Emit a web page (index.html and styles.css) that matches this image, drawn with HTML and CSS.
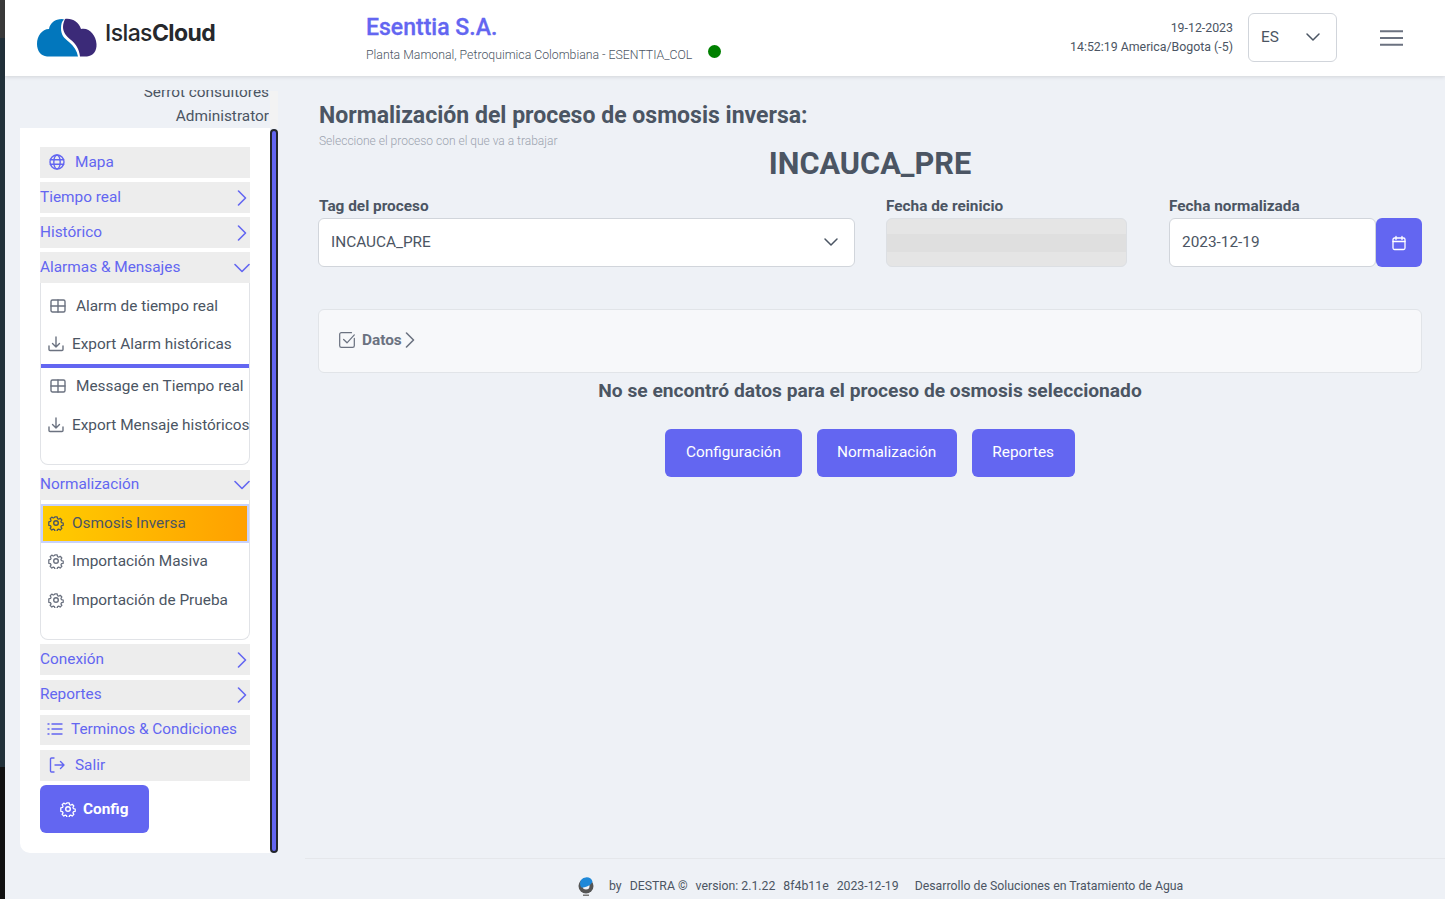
FILE: index.html
```html
<!DOCTYPE html>
<html lang="es">
<head>
    <meta charset="UTF-8">
    <meta name="viewport" content="width=device-width, initial-scale=1.0">
    <title>Normalización - IslasCloud</title>
    <link rel="stylesheet" href="styles.css">
</head>
<body>
    <!-- Desktop peeking out at the left of the window -->
    <div class="desk-strip"></div>

    <div class="app">
        <header class="topbar">
            <div class="brand">
                <svg class="brand-logo" viewBox="0 0 62 39">
                    <path fill="#0277bd" d="M26 1C19 1 14 5 13 11C6 11 1 18 1 26C1 33 5 38 11 38.500H42C41 33 38 28 33 24C28 20 25 17 25 10C25 6 26 3 28 1.500Z"/>
                    <path fill="#3b2a78" d="M29 1C36 0 43 4 45 11C53 9 60 17 60.500 26C61 33 57 38 51 38.500H44C43 31 40 26 35 22C30 18 27 14 27 9C27 6 28 3 29 1Z"/>
                </svg>
                <span class="brand-name">Islas<b>Cloud</b></span>
            </div>
            <div class="client">
                <div class="client-name">Esenttia S.A.</div>
                <div class="client-plant">Planta Mamonal, Petroquimica Colombiana - ESENTTIA_COL <span class="status-dot"></span></div>
            </div>
            <div class="clock">
                <div>19-12-2023</div>
                <div>14:52:19 America/Bogota (-5)</div>
            </div>
            <div class="lang">
                <span>ES</span>
                <svg class="lang-caret" viewBox="0 0 16 16"><path d="M2 5l6 6 6-6"/></svg>
            </div>
            <svg class="burger" viewBox="0 0 24 18"><path d="M0 2h24M0 9h24M0 16h24"/></svg>
        </header>

        <div class="layout">
            <aside class="sidebar">
                <div class="user-box">
                    <div class="user-clip">
                        <div class="user-line">Serrot consultores</div>
                        <div class="user-line">Administrator</div>
                    </div>
                </div>
                <div class="panel-wrap">
                    <nav class="panel">
                        <a class="menu-item menu-icon mapa">
                            <svg class="ico" viewBox="0 0 16 16"><circle cx="8" cy="8" r="7"/><ellipse cx="8" cy="8" rx="3.200" ry="7"/><path d="M1.300 5.700h13.400M1.300 10.300h13.400"/></svg>
                            <span>Mapa</span>
                        </a>
                        <a class="menu-item">Tiempo real
                            <svg class="caret" viewBox="0 0 16 16"><path d="M4.500 1l7 7-7 7"/></svg>
                        </a>
                        <a class="menu-item">Histórico
                            <svg class="caret" viewBox="0 0 16 16"><path d="M4.500 1l7 7-7 7"/></svg>
                        </a>
                        <a class="menu-item">Alarmas &amp; Mensajes
                            <svg class="caret" viewBox="0 0 16 16"><path d="M1 4.500l7 7 7-7"/></svg>
                        </a>
                        <div class="submenu sub-alarms">
                            <a class="sub-item first">
                                <svg class="ico-grid" viewBox="0 0 16 16"><rect x="1" y="2" width="14" height="12" rx="1.500"/><path d="M1 8h14M8 2v12"/></svg>
                                <span>Alarm de tiempo real</span>
                            </a>
                            <a class="sub-item tight">
                                <svg class="ico-sub" viewBox="0 0 16 16"><path d="M1 10v3.500a1 1 0 0 0 1 1h12a1 1 0 0 0 1-1V10M8 1v10M4.500 7.500L8 11l3.500-3.500"/></svg>
                                <span>Export Alarm históricas</span>
                            </a>
                            <div class="sub-divider"></div>
                            <a class="sub-item after-divider">
                                <svg class="ico-grid" viewBox="0 0 16 16"><rect x="1" y="2" width="14" height="12" rx="1.500"/><path d="M1 8h14M8 2v12"/></svg>
                                <span>Message en Tiempo real</span>
                            </a>
                            <a class="sub-item tall">
                                <svg class="ico-sub" viewBox="0 0 16 16"><path d="M1 10v3.500a1 1 0 0 0 1 1h12a1 1 0 0 0 1-1V10M8 1v10M4.500 7.500L8 11l3.500-3.500"/></svg>
                                <span>Export Mensaje históricos</span>
                            </a>
                        </div>
                        <a class="menu-item norm">Normalización
                            <svg class="caret" viewBox="0 0 16 16"><path d="M1 4.500l7 7 7-7"/></svg>
                        </a>
                        <div class="submenu sub-norm">
                            <a class="sub-item active">
                                <svg class="ico-sub" viewBox="0 0 16 16"><use href="#gear"/></svg>
                                <span>Osmosis Inversa</span>
                            </a>
                            <a class="sub-item">
                                <svg class="ico-sub" viewBox="0 0 16 16"><use href="#gear"/></svg>
                                <span>Importación Masiva</span>
                            </a>
                            <a class="sub-item">
                                <svg class="ico-sub" viewBox="0 0 16 16"><use href="#gear"/></svg>
                                <span>Importación de Prueba</span>
                            </a>
                        </div>
                        <a class="menu-item conn">Conexión
                            <svg class="caret" viewBox="0 0 16 16"><path d="M4.500 1l7 7-7 7"/></svg>
                        </a>
                        <a class="menu-item short">Reportes
                            <svg class="caret" viewBox="0 0 16 16"><path d="M4.500 1l7 7-7 7"/></svg>
                        </a>
                        <a class="menu-item short menu-icon terms">
                            <svg class="ico" viewBox="0 0 16 16"><path d="M5 3h10M5 8h10M5 13h10M1 3h1M1 8h1M1 13h1"/></svg>
                            <span>Terminos &amp; Condiciones</span>
                        </a>
                        <a class="menu-item menu-icon mapa">
                            <svg class="ico" viewBox="0 0 16 16"><path d="M5 1H2.500a1 1 0 0 0-1 1v12a1 1 0 0 0 1 1H5M6 8h9M11.500 4.500L15 8l-3.500 3.500"/></svg>
                            <span>Salir</span>
                        </a>
                        <button class="btn btn-config">
                            <svg class="ico-btn" viewBox="0 0 16 16"><use href="#gear"/></svg>
                            Config
                        </button>
                    </nav>
                    <div class="scroll-thumb"></div>
                </div>
            </aside>

            <main class="content">
                <h1 class="page-title">Normalización del proceso de osmosis inversa:</h1>
                <p class="page-hint">Seleccione el proceso con el que va a trabajar</p>
                <h2 class="process-name">INCAUCA_PRE</h2>

                <div class="form-row">
                    <div class="field field-tag">
                        <label>Tag del proceso</label>
                        <div class="input">
                            <span>INCAUCA_PRE</span>
                            <svg class="lang-caret" viewBox="0 0 16 16"><path d="M2 5l6 6 6-6"/></svg>
                        </div>
                    </div>
                    <div class="field field-reset">
                        <label>Fecha de reinicio</label>
                        <div class="input input-disabled"><div class="disabled-band"></div></div>
                    </div>
                    <div class="field field-date">
                        <label>Fecha normalizada</label>
                        <div class="date-group">
                            <div class="input"><span>2023-12-19</span></div>
                            <button class="btn-cal">
                                <svg viewBox="0 0 16 16"><rect x="2" y="3" width="12" height="11.500" rx="1.500"/><path d="M2 6.500h12M5 1.500v3M11 1.500v3"/></svg>
                            </button>
                        </div>
                    </div>
                </div>

                <div class="datos-card">
                    <svg class="datos-check" viewBox="0 0 16 16"><path d="M14.500 6.500V13a1.500 1.500 0 0 1-1.500 1.500H3A1.500 1.500 0 0 1 1.500 13V3A1.500 1.500 0 0 1 3 1.500h9M5 7.500l3 3 6.500-7"/></svg>
                    <span class="datos-label">Datos</span>
                    <svg class="datos-caret" viewBox="0 0 16 16"><path d="M4.500 1l7 7-7 7"/></svg>
                </div>

                <p class="no-data">No se encontró datos para el proceso de osmosis seleccionado</p>

                <div class="actions">
                    <button class="btn">Configuración</button>
                    <button class="btn">Normalización</button>
                    <button class="btn">Reportes</button>
                </div>
            </main>
        </div>

        <footer class="footer">
            <svg class="footer-logo" viewBox="0 0 18 20">
                <circle cx="9" cy="10" r="7.500" fill="#555"/>
                <circle cx="9" cy="10" r="3.500" fill="#eef1f6"/>
                <path fill="#1e88d8" d="M3 7a6.500 6.500 0 0 1 12.500-1.500C14 9 10 11.500 4.500 11.500 3.500 10.500 3 9 3 7z"/>
                <path fill="#777" d="M6 18.500h6V20H6z"/>
            </svg>
            <span class="footer-by">by</span>
            <span class="footer-text">DESTRA ©</span>
            <span class="footer-text">version: 2.1.22</span>
            <span class="footer-text">8f4b11e</span>
            <span class="footer-text">2023-12-19</span>
            <span class="footer-text footer-tag">Desarrollo de Soluciones en Tratamiento de Agua</span>
        </footer>
    </div>

    <svg class="defs" width="0" height="0">
        <symbol id="gear" viewBox="0 0 16 16">
            <path d="M6.700 1.300h2.600l.4 1.900 1.300.6 1.700-1 1.800 1.800-1 1.700.6 1.300 1.900.4v2.600l-1.900.4-.6 1.300 1 1.700-1.800 1.800-1.700-1-1.300.6-.4 1.900H6.700l-.4-1.900-1.300-.6-1.700 1-1.800-1.800 1-1.700-.6-1.300-1.900-.4V6.700l1.900-.4.600-1.300-1-1.700 1.800-1.800 1.700 1 1.300-.6z" transform="translate(.8 .8) scale(.9)"/>
            <circle cx="8" cy="8" r="2.300"/>
        </symbol>
    </svg>
</body>
</html>
```

FILE: styles.css
```css
/* General */
* {
    box-sizing: border-box;
}

html {
    font-size: 15.36px;
    height: 100%;
}

body {
    margin: 0;
    height: 100%;
    font-family: Roboto, "Liberation Sans", sans-serif;
    font-size: 1rem;
    background: #eef1f6;
    color: #4b5563;
    overflow: hidden;
}

svg {
    fill: none;
    stroke: currentColor;
    stroke-linecap: round;
    stroke-linejoin: round;
    flex-shrink: 0;
}

.defs {
    position: absolute;
}

.desk-strip {
    position: absolute;
    left: 0;
    top: 0;
    bottom: 0;
    width: 5px;
    background: linear-gradient(#3a3a3a 0, #3a3a3a 38px, #22313a 38px, #22313a 767px, #111 767px);
}

.app {
    margin-left: 5px;
    height: 899px;
    display: flex;
    flex-direction: column;
}

/* Top bar */
.topbar {
    height: 76px;
    flex-shrink: 0;
    background: #fff;
    box-shadow: 0 1px 4px rgba(0, 0, 0, 0.12);
    display: flex;
    align-items: center;
    position: relative;
    z-index: 2;
}

.brand {
    width: 361px;
    padding-left: 31px;
    display: flex;
    align-items: center;
    gap: 8px;
}

.brand-logo {
    width: 62px;
    height: 39px;
    stroke: none;
    margin-top: -1px;
}

.brand-name {
    font-family: Inter, sans-serif;
    font-weight: 500;
    font-size: 23px;
    letter-spacing: -0.6px;
    color: #26282c;
    margin-top: -10px;
    margin-left: -1px;
}

.brand-name b {
    font-weight: 700;
}

.client {
    flex: 1;
}

.client-name {
    font-size: 23.04px;
    font-weight: 500;
    line-height: 28px;
    color: #6366f1;
    margin-bottom: 4px;
    -webkit-text-stroke: 0.3px #6366f1;
}

.client-plant {
    font-size: 12.29px;
    font-weight: 300;
    color: #4b5563;
    line-height: 14px;
}

.status-dot {
    display: inline-block;
    width: 13px;
    height: 13px;
    background: #008000;
    border-radius: 50%;
    margin-left: 13px;
    position: relative;
    top: -1px;
}

.clock {
    font-size: 12.35px;
    text-align: right;
    line-height: 19px;
    margin-right: 15px;
    margin-top: -1px;
}

.lang {
    width: 89px;
    height: 49px;
    border: 1px solid #d1d5db;
    border-radius: 6px;
    display: flex;
    align-items: center;
    justify-content: space-between;
    padding: 0 15px 2px 12px;
    margin-right: 43px;
    margin-top: -1px;
}

.lang-caret {
    width: 16px;
    height: 16px;
    stroke-width: 1.500;
}

.burger {
    width: 23px;
    height: 18px;
    stroke: #6b7280;
    stroke-width: 2;
    margin-right: 42px;
    stroke-linecap: butt;
}

/* Sidebar */
.layout {
    flex: 1;
    display: flex;
    min-height: 0;
}

.sidebar {
    width: 300px;
    padding-left: 15px;
    flex-shrink: 0;
}

.user-box {
    width: 258px;
    height: 52px;
    padding: 14px 9px 0 0;
    position: relative;
    text-align: right;
    color: #4b5563;
    line-height: 24px;
}

.user-box::after {
    content: "";
    position: absolute;
    right: 0;
    top: 15px;
    bottom: 0;
    width: 8px;
    background: #f3f3f3;
}

.user-clip {
    height: 38px;
    overflow: hidden;
}

.user-line:first-child {
    margin-top: -10px;
}

.panel-wrap {
    display: flex;
    width: 258px;
    height: 725px;
}

.panel {
    width: 250px;
    height: 725px;
    background: #fff;
    border-radius: 0 0 0 10px;
    padding: 19px 20px 0;
}

.scroll-thumb {
    width: 8px;
    margin-top: 1px;
    background: #6366f1;
    border: 2px solid #22252c;
    border-radius: 4px;
}

.menu-item {
    height: 31px;
    margin-bottom: 4px;
    background: #ededed;
    color: #6366f1;
    display: flex;
    align-items: center;
    justify-content: space-between;
    padding-bottom: 2px;
}

.menu-item.short {
    height: 30px;
    margin-bottom: 5px;
}

.menu-item.norm {
    height: 30px;
    margin-bottom: 0;
}

.menu-item.conn {
    margin-bottom: 5px;
}

.menu-icon {
    justify-content: flex-start;
}

.mapa {
    padding-left: 9px;
    gap: 10px;
}

.terms {
    padding-left: 7px;
    gap: 8px;
}

.ico {
    width: 16px;
    height: 16px;
    stroke-width: 1.400;
}

.caret {
    width: 16px;
    height: 16px;
    margin-top: 2px;
    stroke-width: 1.600;
}

.submenu {
    background: #fff;
    border: 1px solid #e1e3e7;
    border-top: none;
    border-radius: 0 0 8px 8px;
    color: #4b5563;
    margin-top: -4px;
}

.sub-alarms {
    height: 182px;
    margin-bottom: 5px;
}

.sub-norm {
    height: 140px;
    margin-top: 0;
    margin-bottom: 4px;
    padding-top: 4px;
}

.sub-item {
    height: 38.500px;
    display: flex;
    align-items: center;
    padding-left: 7px;
    gap: 8px;
    white-space: nowrap;
}

.sub-item.first {
    height: 44px;
    padding-top: 1px;
}

.sub-item.tight {
    height: 34px;
}

.sub-item.after-divider {
    height: 36px;
}

.sub-item.tall {
    height: 42px;
}

.sub-divider {
    height: 4px;
    background: #6366f1;
    margin-top: 3px;
}

.ico-grid, .ico-sub {
    width: 16px;
    height: 16px;
    stroke-width: 1.400;
    color: #6b7280;
}

.ico-grid {
    margin-left: 2px;
    margin-right: 2px;
}

.sub-item.active {
    height: 39px;
    background: linear-gradient(90deg, #ffcc00, #ffa000);
    border: 2px solid #c7d2fe;
    padding-left: 5px;
    padding-bottom: 2px;
    margin-bottom: -1px;
}

.sub-item.active .ico-sub {
    color: #4b5563;
}

/* Buttons */
.btn {
    height: 48px;
    padding: 0 20.500px 2px;
    border: none;
    border-radius: 6px;
    background: #6366f1;
    color: #fff;
    font-family: inherit;
    font-size: 1rem;
    display: inline-flex;
    align-items: center;
}

.btn-config {
    width: 109px;
    padding: 0 20px;
    font-weight: 700;
    gap: 7px;
}

.ico-btn {
    width: 16px;
    height: 16px;
    stroke-width: 1.400;
}

/* Main content */
.content {
    flex: 1;
    min-width: 0;
    padding: 0 23px 0 13px;
    display: flex;
    flex-direction: column;
}

.page-title {
    margin: 25px 0 0 1px;
    font-size: 23.04px;
    font-weight: 700;
    line-height: 30px;
    color: #4b5563;
}

.page-hint {
    margin: 3px 0 0 1px;
    font-size: 12px;
    font-weight: 300;
    line-height: 14px;
    color: #9ca3af;
}

.process-name {
    margin: -2px 0 0;
    font-size: 30.72px;
    font-weight: 700;
    line-height: 36px;
    text-align: center;
    color: #4b5563;
}

.form-row {
    display: flex;
    margin-top: 14px;
}

.field label {
    display: block;
    font-weight: 700;
    line-height: 20px;
    color: #4b5563;
    margin-bottom: 2px;
}

.field-tag label {
    margin-left: 1px;
}

.field-tag {
    width: 537px;
    margin-right: 31px;
}

.field-reset {
    width: 241px;
    margin-right: 42px;
}

.field-date {
    width: 253px;
}

.input {
    height: 49px;
    background: #fff;
    border: 1px solid #d1d5db;
    border-radius: 6px;
    padding: 0 15px 2px 12px;
    display: flex;
    align-items: center;
    justify-content: space-between;
    color: #4b5563;
}

.input-disabled {
    background: #e5e5e5;
    padding: 0;
    border-color: #dcdfe3;
}

.disabled-band {
    width: 100%;
    height: 18px;
    background: #dfdfdf;
}

.date-group {
    display: flex;
}

.date-group .input {
    width: 207px;
}

.btn-cal {
    width: 46px;
    height: 49px;
    border: none;
    border-radius: 6px;
    background: #6366f1;
    color: #fff;
    display: flex;
    align-items: center;
    justify-content: center;
    padding: 0;
}

.btn-cal svg {
    width: 16px;
    height: 16px;
    stroke-width: 1.300;
}

.datos-card {
    height: 64px;
    margin-top: 42px;
    background: #f7f8fa;
    border: 1px solid #e1e4e8;
    border-radius: 6px;
    display: flex;
    align-items: center;
    padding-left: 19px;
    padding-bottom: 2px;
    color: #6b7280;
}

.datos-check {
    width: 18px;
    height: 18px;
    stroke-width: 1.100;
    margin-right: 6px;
}

.datos-label {
    font-weight: 700;
}

.datos-caret {
    width: 16px;
    height: 16px;
    stroke-width: 1.600;
}

.no-data {
    margin: 6px 0 0;
    font-size: 19.2px;
    font-weight: 700;
    line-height: 24px;
    text-align: center;
    color: #4b5563;
}

.actions {
    display: flex;
    justify-content: center;
    gap: 15px;
    margin-top: 26px;
}

/* Footer */
.footer {
    height: 41px;
    flex-shrink: 0;
    margin-left: 300px;
    border-top: 1px solid #e5e7eb;
    display: flex;
    align-items: center;
    padding-left: 272px;
    padding-top: 13px;
    font-size: 12.29px;
    color: #4b5563;
}

.footer-logo {
    width: 18px;
    height: 20px;
    stroke: none;
    margin-right: 14px;
}

.footer-by {
    margin-right: 8px;
}

.footer-text {
    margin-right: 8px;
}

.footer-tag {
    margin-left: 8px;
}
```
